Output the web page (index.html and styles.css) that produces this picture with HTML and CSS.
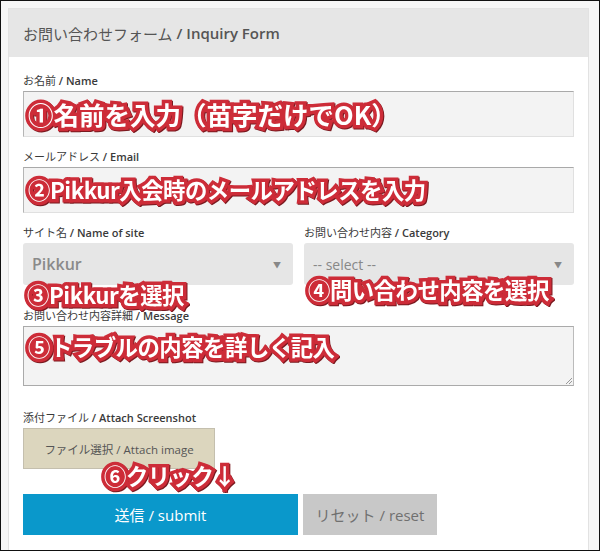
FILE: index.html
```html
<!DOCTYPE html>
<html lang="ja">
<head>
<meta charset="utf-8">
<link rel="stylesheet" href="styles.css">
</head>
<body>
<div class="frame">
  <div class="card">
    <div class="card-head">お問い合わせフォーム <span class="en">/ Inquiry Form</span></div>
    <div class="card-body">
      <div class="field">
        <div class="label">お名前 <span class="en">/ Name</span></div>
        <div class="input"><span class="note note-1">①名前を入力（苗字だけでOK）</span></div>
      </div>
      <div class="field">
        <div class="label">メールアドレス <span class="en">/ Email</span></div>
        <div class="input"><span class="note note-2">②Pikkur入会時のメールアドレスを入力</span></div>
      </div>
      <div class="row">
        <div class="col">
          <div class="label">サイト名 <span class="en">/ Name of site</span></div>
          <div class="select"><span class="sel-text sel-big">Pikkur</span><span class="arrow">▼</span>
            <span class="note note-3">③Pikkurを選択</span></div>
        </div>
        <div class="col">
          <div class="label">お問い合わせ内容 <span class="en">/ Category</span></div>
          <div class="select"><span class="sel-text">-- select --</span><span class="arrow">▼</span>
            <span class="note note-4">④問い合わせ内容を選択</span></div>
        </div>
      </div>
      <div class="field field-msg">
        <div class="label">お問い合わせ内容詳細 <span class="en">/ Message</span></div>
        <div class="textarea"><span class="note note-5">⑤トラブルの内容を詳しく記入</span>
          <svg class="grip" width="9" height="9" viewBox="0 0 9 9"><path d="M8 2 L2 8 M8 5 L5 8" stroke="#999" stroke-width="1"/></svg>
        </div>
      </div>
      <div class="field field-file">
        <div class="label">添付ファイル <span class="en">/ Attach Screenshot</span></div>
        <div class="file-btn">ファイル選択 / Attach image<span class="note note-6">⑥クリック↓</span></div>
      </div>
      <div class="buttons">
        <div class="btn btn-submit">送信 / submit</div>
        <div class="btn btn-reset">リセット / reset</div>
      </div>
    </div>
  </div>
</div>
</body>
</html>
```

FILE: styles.css
```css
* { box-sizing: border-box; }
html, body { margin: 0; padding: 0; }
body {
  font-family: "Open Sans", "Noto Sans CJK JP", sans-serif;
  color: #444;
  background: #fff;
}
.frame {
  width: 600px;
  height: 551px;
  border: 1px solid #111;
  background: #f6f6f6;
  padding: 7px 10px 0 7px;
  overflow: hidden;
}
.card {
  width: 581px;
  height: 560px;
  background: #fff;
  border: 1px solid #e2e2e2;
}
.card-head {
  height: 48px;
  background: #e6e6e6;
  padding: 0 14px;
  display: flex;
  align-items: center;
  gap: 4px;
  font-size: 15px;
  color: #555;
}
.en { font-weight: 600; }
.card-body {
  padding: 16px 14px 0 14px;
}
.label {
  font-size: 11px;
  line-height: 16px;
  color: #3a3a3a;
  margin-bottom: 2px;
  white-space: nowrap;
}
.field { margin-bottom: 12px; }
.input {
  position: relative;
  height: 46px;
  background: #f3f3f3;
  border: 1px solid #e0e0e0;
  border-top-color: #a9a9a9;
  border-left-color: #b5b5b5;
}
.row {
  display: flex;
  gap: 11px;
  margin-bottom: 23px;
}
.col { flex: 0 0 270px; }
.select {
  position: relative;
  height: 42px;
  background: #e6e6e6;
  border-radius: 3px;
  display: flex;
  align-items: center;
  padding: 0 10px 0 9px;
}
.sel-text {
  flex: 1;
  font-size: 14px;
  color: #888;
}
.sel-big { font-size: 16px; font-weight: 600; color: #8a8a8a; }
.arrow {
  font-size: 8px;
  color: #888;
  margin-right: 2px;
}
.field-msg { margin-bottom: 24px; }
.textarea {
  position: relative;
  height: 60px;
  background: #f3f3f3;
  border: 1px solid #aaa;
  border-right-color: #bbb;
}
.grip {
  position: absolute;
  right: 0;
  bottom: 0;
}
.field-file { margin-bottom: 25px; }
.file-btn {
  position: relative;
  width: 192px;
  height: 41px;
  background: #dcd6be;
  border: 1px solid #c4bfae;
  display: flex;
  align-items: center;
  justify-content: center;
  font-size: 11.5px;
  color: #555;
}
.buttons {
  display: flex;
  gap: 5px;
}
.btn {
  height: 41px;
  display: flex;
  align-items: center;
  justify-content: center;
  font-size: 15px;
}
.btn-submit {
  width: 275px;
  background: #0a98cb;
  color: #fff;
}
.btn-reset {
  width: 134px;
  background: #c8c8c8;
  color: #707070;
}
.note {
  position: absolute;
  font-family: "Noto Sans CJK JP", sans-serif;
  font-weight: 700;
  font-size: 22.4px;
  line-height: 24px;
  color: #fff;
  white-space: nowrap;
  -webkit-text-stroke: 7px #cd2c38;
  paint-order: stroke fill;
  filter: drop-shadow(1px 1px 0 #7a1a20);
  letter-spacing: -0.5px;
  pointer-events: none;
}
.note-1 { left: 4px; top: 9px; font-size: 25.5px; letter-spacing: 0; line-height: 26px; }
.note-2 { left: 4px; top: 9px; }
.note-3 { left: 4px; top: 39px; }
.note-4 { left: 4px; top: 34px; }
.note-5 { left: 4px; top: 7px; }
.note-6 { left: 80px; top: 34px; }
```
